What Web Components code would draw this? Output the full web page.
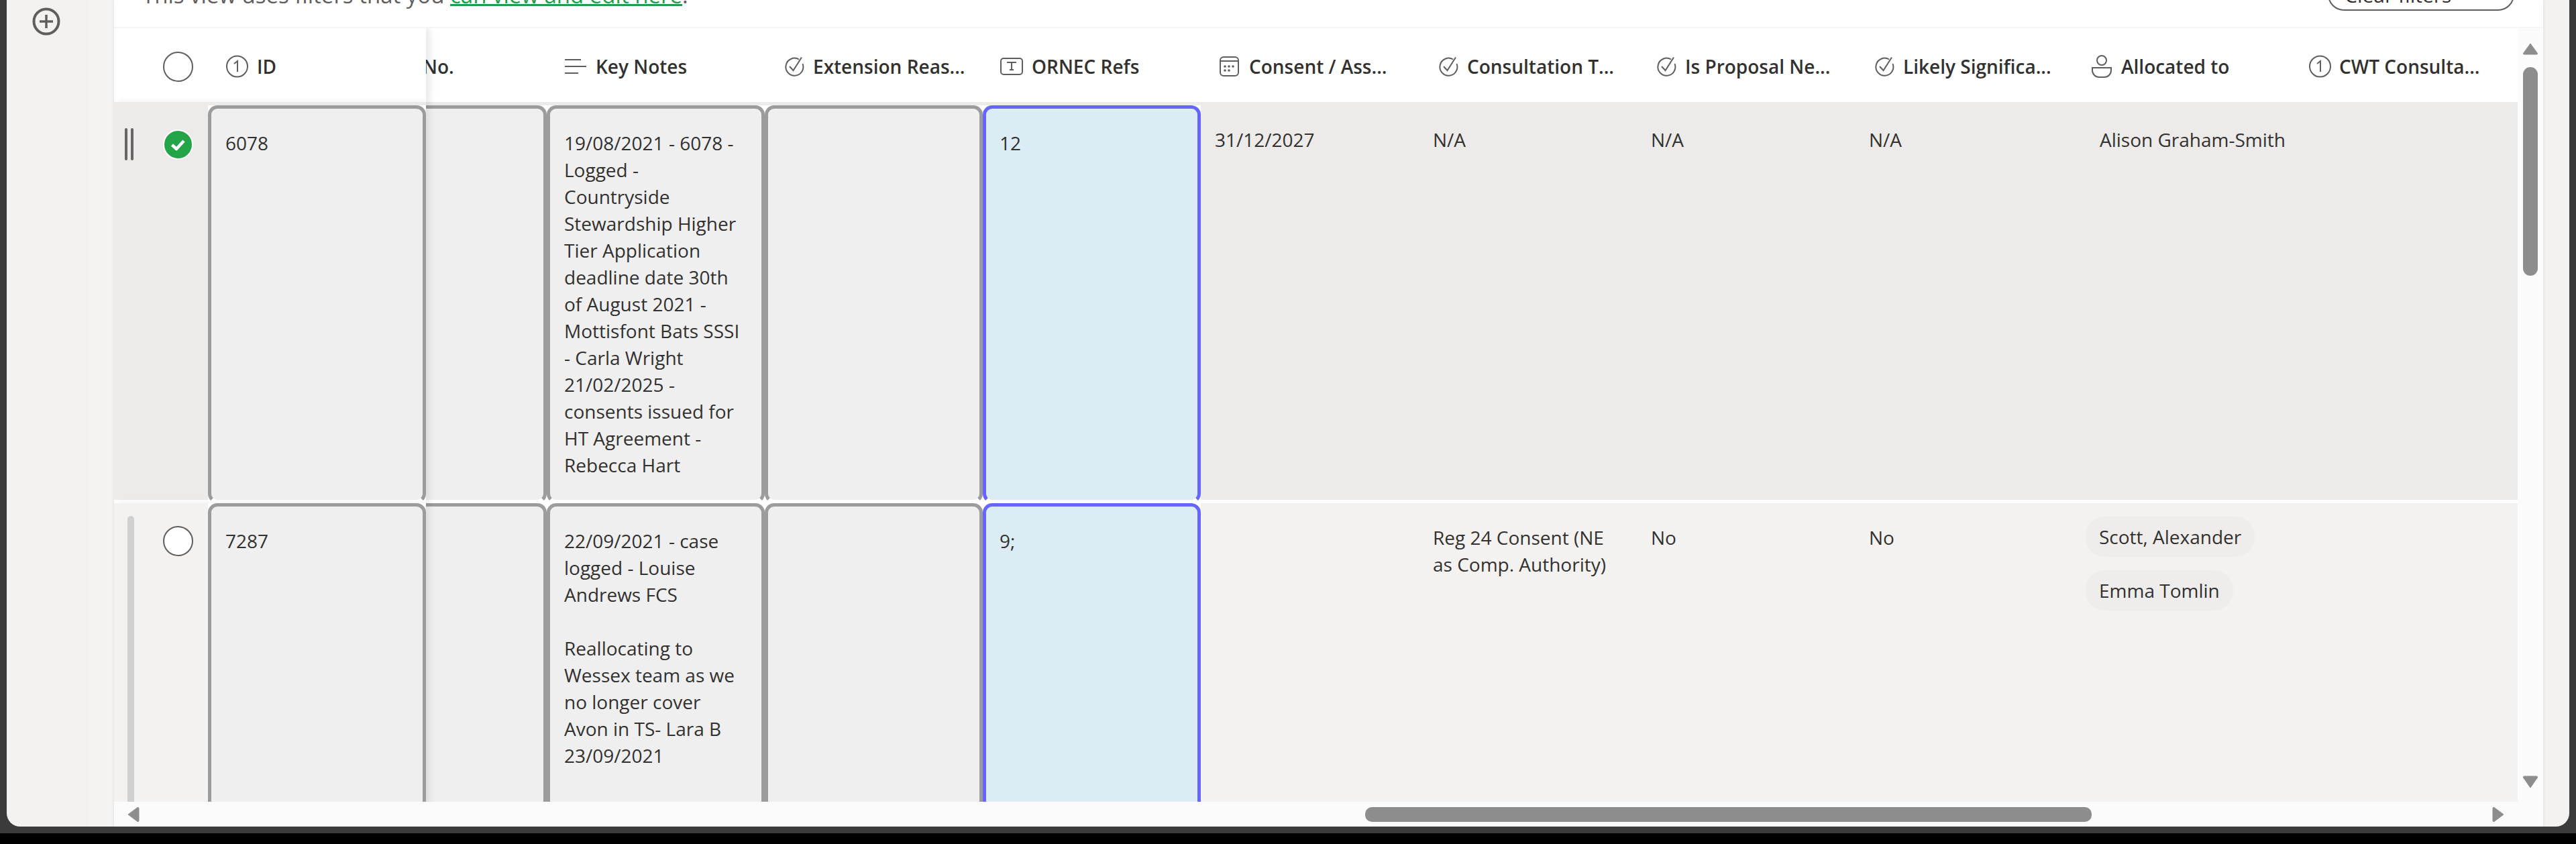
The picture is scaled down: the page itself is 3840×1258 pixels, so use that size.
<!DOCTYPE html>
<html><head><meta charset="utf-8">
<style>
html,body{margin:0;padding:0;background:#000;overflow:hidden}
body{width:3840px;height:1258px;font-family:"Open Sans","Noto Sans",sans-serif;color:#323130}
</style></head><body>
<template id="t-shell"><style>
:host{display:block;width:3840px;height:1258px;background:#000}
.outer{height:1242px;box-sizing:border-box;background:#3b3b3b;padding:0 10px 10px}
.frame{display:flex;height:1232px;background:#f3f2f1;box-sizing:border-box;border-radius:0 0 20px 20px;overflow:hidden}
.rail{width:119px;flex:none;box-sizing:border-box;padding:11px 0 0 38px}
.gutter{width:41px;flex:none;background:#f4f3f2;border-left:1px solid #eeedec;box-sizing:border-box}
.main{width:3621px;flex:none;display:flex;flex-direction:column;background:#fff;box-shadow:0 0 4px rgba(0,0,0,.1)}
.right{flex:1}
</style><div class="outer"><div class="frame"><div class="rail"><slot name="rail"></slot></div><div class="gutter"></div><div class="main"><slot></slot></div><div class="right"></div></div></div></template>

<template id="t-filterbar"><style>
:host{display:flex;align-items:flex-end;justify-content:space-between;height:40px;flex:none;overflow:hidden;box-sizing:border-box;padding:0 43px 24px 42px;font-size:33px;color:#605e5c}
.t{white-space:nowrap;margin-bottom:1px}
.btn{box-sizing:border-box;width:278px;height:48px;border:2.5px solid #605e5c;border-radius:24px;padding:0 23px;display:flex;align-items:center;color:#323130;font-weight:500;white-space:nowrap;font-size:30px;flex:none}
</style><span class="t"><slot></slot></span><span class="btn">Clear filters</span></template>

<template id="t-grid"><style>
:host{display:grid;grid-template-columns:1fr 38px;grid-template-rows:1fr 37px;flex:1;min-height:0;border-top:2px solid #f5f5f5;background:#fbfbfb}
.view{overflow:hidden;background:#fff;display:flex;flex-direction:column;min-height:0}
.vbar{display:flex;flex-direction:column;align-items:center;padding:21px 0 0 0;background:#fbfbfb;min-height:0}
.hbar{display:flex;align-items:center;background:#fbfbfb;height:37px;padding-left:20px;box-sizing:border-box}
.thumbv{width:22px;height:311px;background:#8d8d8d;border-radius:11px;margin-top:18px;flex:none}
.sp{flex:1}
.thumbh{height:22px;width:1083px;background:#8d8d8d;border-radius:10px;margin-left:1827px;flex:none}
svg{display:block;flex:none}
.cr{background:#fbfbfb}
</style>
<div class="view"><slot></slot></div>
<div class="vbar">
<svg width="24" height="19" viewBox="0 0 24 19"><path d="M12 2 L22.5 16.5 Q23 18 21 18 L3 18 Q1 18 1.5 16.5 Z" fill="#8d8d8d" stroke="#8d8d8d" stroke-linejoin="round"/></svg>
<div class="thumbv"></div><div class="sp"></div>
<svg width="24" height="19" viewBox="0 0 24 19" style="margin-bottom:20px"><path d="M12 18 L22.5 3 Q23 1 21 1 L3 1 Q1 1 1.5 3 Z" fill="#8d8d8d" stroke="#8d8d8d" stroke-linejoin="round"/></svg>
</div>
<div class="hbar">
<svg width="18" height="24" viewBox="0 0 18 24"><path d="M1 12 L15 1.5 Q17 1 17 3 L17 21 Q17 23 15 22.5 Z" fill="#8d8d8d" stroke="#8d8d8d" stroke-linejoin="round"/></svg>
<div class="thumbh"></div><div class="sp"></div>
<svg width="18" height="24" viewBox="0 0 18 24" style="margin-right:20px"><path d="M17 12 L3 1.5 Q1 1 1 3 L1 21 Q1 23 3 22.5 Z" fill="#8d8d8d" stroke="#8d8d8d" stroke-linejoin="round"/></svg>
</div>
<div class="cr"></div></template>

<template id="t-head"><style>
:host{display:flex;height:110px;flex:none;background:#fff;position:relative;white-space:nowrap;font-size:28px;font-weight:600;color:#323130}
.stick{position:absolute;left:0;top:0;width:465px;height:110px;padding-top:4px;box-sizing:border-box;background:#fff;box-shadow:6px 0 10px rgba(0,0,0,.09);display:flex;align-items:center;z-index:2}
.cols{display:flex;margin-left:465px;overflow:hidden;width:3118px}
.sel{margin-left:73px;width:45px;height:45px;border:2px solid #605e5c;border-radius:50%;box-sizing:border-box;flex:none}
.idh{margin-left:48px;display:flex;align-items:center}
</style><div class="stick"><span class="sel"></span><span class="idh"><slot name="id"></slot></span></div><div class="cols"><slot></slot></div></template>

<template id="t-hcell"><style>
:host{display:flex;align-items:center;flex:none;box-sizing:border-box;width:325px;height:110px;padding-top:4px}
.i{width:44px;flex:none;display:flex}
</style><span class="i"><slot name="icon"></slot></span><slot></slot></template>

<template id="t-row"><style>
:host{display:flex;flex:none;position:relative;font-size:28px;line-height:40px;color:#323130;background:linear-gradient(var(--bg) calc(100% - var(--gap,0px)),#fff 0);padding-top:var(--top,0)}
.stick{position:absolute;left:0;top:0;bottom:0;width:465px;background:linear-gradient(var(--bg) calc(100% - var(--gap,0px)),#fff 0);box-shadow:6px 0 10px rgba(0,0,0,.07);z-index:2;display:flex;padding-top:var(--top,0);box-sizing:border-box}
.lead{width:140px;flex:none;position:relative}
.cols{display:flex;margin-left:465px;width:3118px;overflow:hidden}
</style><div class="stick"><div class="lead"><slot name="lead"></slot></div><slot name="id"></slot></div><div class="cols"><slot></slot></div></template>

<template id="t-cell"><style>
:host{display:block;flex:none;box-sizing:border-box;width:325px;background:#fff;white-space:nowrap}
:host([plain]){background:transparent}
:host([first]){width:180px}
.b{box-sizing:border-box;height:100%;border:5px solid #9c9c9c;border-bottom-color:#fff;border-radius:14px;background:#efefef;padding:31px 10px 0 21px}
:host([hl]) .b{border-color:#6666ff;border-bottom-color:#fff;background:#dcecf4;padding-left:20px}
:host([first]) .b{border-left:0;border-radius:0 14px 14px 0;padding:0}
:host([plain]) .b{border:0;background:transparent;padding-top:31px;border-radius:0}
</style><div class="b"><slot></slot></div></template>

<template id="t-pill"><style>
:host{display:block;height:60px;line-height:60px;padding:0 20px;background:#eeedec;border-radius:28px;white-space:nowrap}
</style><slot></slot></template>

<svg width="0" height="0" style="position:absolute"><defs>
<symbol id="num" viewBox="0 0 36 36"><circle cx="17.5" cy="18" r="15.5" fill="none" stroke="#605e5c" stroke-width="2"/><path d="M13 14 L18 10 V26" fill="none" stroke="#605e5c" stroke-width="2"/></symbol>
<symbol id="chk" viewBox="0 0 32 32"><path d="M23 5.5 A13 13 0 1 0 28.5 12" fill="none" stroke="#605e5c" stroke-width="2"/><path d="M9 16 L14.5 22 L27 2.5" fill="none" stroke="#605e5c" stroke-width="2"/></symbol>
</defs></svg>

<app-shell>
<svg slot="rail" width="42" height="42" viewBox="0 0 42 42" style="display:block"><circle cx="21" cy="21" r="18.5" fill="none" stroke="#605e5c" stroke-width="4"/><path d="M21 11 V31 M11 21 H31" stroke="#605e5c" stroke-width="3.5"/></svg>
<filter-bar>This view uses filters that you <a style="color:#1e9e4a;text-decoration:underline;text-decoration-thickness:3px;text-underline-offset:1px">can view and edit here</a>.</filter-bar>
<data-grid>
<grid-head>
<span slot="id" style="display:flex;align-items:center"><svg width="36" height="36" style="margin-right:11px"><use href="#num"/></svg>ID</span>
<head-cell style="width:180px"><span style="margin-left:-49px">No.</span></head-cell>
<head-cell style="padding-left:27px"><svg slot="icon" width="32" height="30" viewBox="0 0 32 30"><path d="M0 5 H24 M0 15 H32 M0 25 H20" stroke="#605e5c" stroke-width="2" fill="none"/></svg><span style="margin-left:2px">Key Notes</span></head-cell>
<head-cell style="padding-left:28px"><svg slot="icon" width="32" height="32"><use href="#chk"/></svg>Extension Reas...</head-cell>
<head-cell style="padding-left:26px"><svg slot="icon" width="34" height="26" viewBox="0 0 34 26"><rect x="1" y="1" width="32" height="24" rx="4" fill="none" stroke="#605e5c" stroke-width="2"/><path d="M11 8 V7 H23 V8 M17 7 V18 M14 18 H20" fill="none" stroke="#605e5c" stroke-width="2"/></svg><span style="margin-left:3px">ORNEC Refs</span></head-cell>
<head-cell style="padding-left:28px"><svg slot="icon" width="29" height="30" viewBox="0 0 29 30"><rect x="1" y="1" width="27" height="28" rx="5" fill="none" stroke="#605e5c" stroke-width="2"/><path d="M1 7 H28" stroke="#605e5c" stroke-width="2"/><g fill="#605e5c"><circle cx="8" cy="15" r="1.8"/><circle cx="14" cy="15" r="1.8"/><circle cx="20" cy="15" r="1.8"/><circle cx="8" cy="21" r="1.8"/><circle cx="14" cy="21" r="1.8"/></g></svg>Consent / Ass...</head-cell>
<head-cell style="padding-left:28px"><svg slot="icon" width="32" height="32"><use href="#chk"/></svg>Consultation T...</head-cell>
<head-cell style="padding-left:28px"><svg slot="icon" width="32" height="32"><use href="#chk"/></svg>Is Proposal Ne...</head-cell>
<head-cell style="padding-left:28px"><svg slot="icon" width="32" height="32"><use href="#chk"/></svg>Likely Significa...</head-cell>
<head-cell style="padding-left:28px"><svg slot="icon" width="30" height="34" viewBox="0 0 30 34"><circle cx="15" cy="8" r="7" fill="none" stroke="#605e5c" stroke-width="2"/><path d="M1 19 H29 V23 A10 10 0 0 1 19 33 H11 A10 10 0 0 1 1 23 Z" fill="none" stroke="#605e5c" stroke-width="2"/></svg>Allocated to</head-cell>
<head-cell style="padding-left:26px"><svg slot="icon" width="36" height="36"><use href="#num"/></svg><span style="margin-left:2px">CWT Consulta...</span></head-cell>
</grid-head>

<grid-row style="--bg:#ecebe9;--top:5px;--gap:5px;height:593px">
<svg slot="lead" width="14" height="48" viewBox="0 0 14 48" style="position:absolute;left:16px;top:34px"><path d="M2 2 V46 M11 2 V46" stroke="#666" stroke-width="4" stroke-linecap="round"/></svg>
<svg slot="lead" width="45" height="45" viewBox="0 0 45 45" style="position:absolute;left:73px;top:36px"><circle cx="22.5" cy="22.5" r="21.5" fill="#22a447" stroke="#fff" stroke-width="2"/><path d="M13.5 23 L20 29 L31 17" fill="none" stroke="#fff" stroke-width="4.5" stroke-linejoin="round"/></svg>
<grid-cell slot="id">6078</grid-cell>
<grid-cell first></grid-cell>
<grid-cell>19/08/2021 - 6078 -<br>Logged -<br>Countryside<br>Stewardship Higher<br>Tier Application<br>deadline date 30th<br>of August 2021 -<br>Mottisfont Bats SSSI<br>- Carla Wright<br>21/02/2025 -<br>consents issued for<br>HT Agreement -<br>Rebecca Hart</grid-cell>
<grid-cell></grid-cell>
<grid-cell hl>12</grid-cell>
<grid-cell plain>31/12/2027</grid-cell>
<grid-cell plain>N/A</grid-cell>
<grid-cell plain>N/A</grid-cell>
<grid-cell plain>N/A</grid-cell>
<grid-cell plain><div style="padding-left:19px">Alison Graham-Smith</div></grid-cell>
<grid-cell plain></grid-cell>
</grid-row>
<grid-row style="--bg:#f3f2f1;flex:1;min-height:600px">
<svg slot="lead" width="10" height="440" viewBox="0 0 10 440" style="position:absolute;left:20px;top:19px"><rect width="10" height="440" rx="5" fill="#d0d0d0"/></svg>
<svg slot="lead" width="45" height="45" viewBox="0 0 45 45" style="position:absolute;left:73px;top:34px"><circle cx="22.5" cy="22.5" r="21.5" fill="#fff" stroke="#605e5c" stroke-width="2"/></svg>
<grid-cell slot="id">7287</grid-cell>
<grid-cell first></grid-cell>
<grid-cell>22/09/2021 - case<br>logged - Louise<br>Andrews FCS<br><br>Reallocating to<br>Wessex team as we<br>no longer cover<br>Avon in TS- Lara B<br>23/09/2021</grid-cell>
<grid-cell></grid-cell>
<grid-cell hl>9;</grid-cell>
<grid-cell plain></grid-cell>
<grid-cell plain>Reg 24 Consent (NE<br>as Comp. Authority)</grid-cell>
<grid-cell plain>No</grid-cell>
<grid-cell plain>No</grid-cell>
<grid-cell plain><div style="display:flex;flex-direction:column;align-items:flex-start;gap:20px;margin-top:-11px;margin-left:-2px"><user-pill>Scott, Alexander</user-pill><user-pill>Emma Tomlin</user-pill></div></grid-cell>
<grid-cell plain></grid-cell>
</grid-row>
</data-grid>
</app-shell>

<script>
function reg(name,tpl){customElements.define(name,class extends HTMLElement{constructor(){super();this.attachShadow({mode:'open'}).appendChild(document.getElementById(tpl).content.cloneNode(true));}});}
reg('app-shell','t-shell');reg('filter-bar','t-filterbar');reg('data-grid','t-grid');reg('grid-head','t-head');reg('head-cell','t-hcell');reg('grid-row','t-row');reg('grid-cell','t-cell');reg('user-pill','t-pill');
</script>
</body></html>
